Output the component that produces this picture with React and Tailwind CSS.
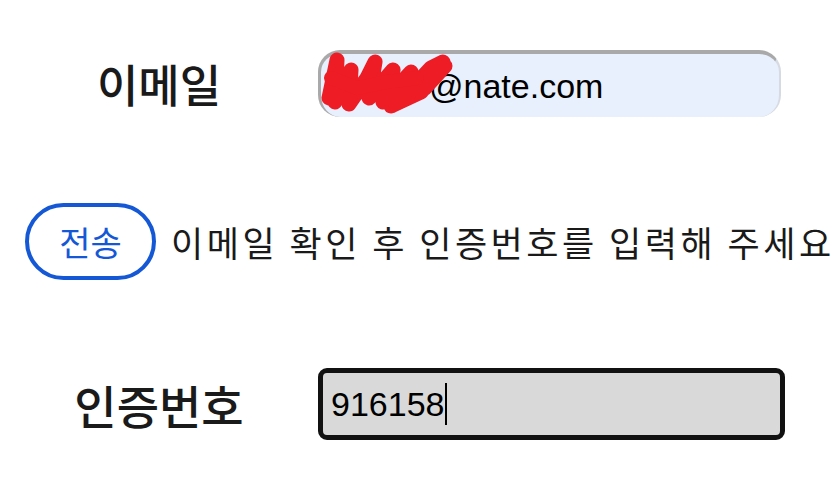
import React from "react";

export default function App() {
  const kr = { fontFamily: '"Noto Sans CJK KR", "Noto Sans", sans-serif' };
  const ar = { fontFamily: '"Liberation Sans", Arial, sans-serif' };
  return (
    <div className="w-[840px] h-[483px] bg-white overflow-hidden pt-[50px] text-[#1a1a1a]">
      {/* email row */}
      <div className="flex items-center h-[67px]">
        <div className="w-[318px] text-center text-[45px] font-medium leading-none" style={kr}>
          이메일
        </div>
        <div className="relative w-[463px] h-[67px] rounded-[22px] bg-[#e8f0fe] border-t-[4px] border-l-[3px] border-r-[2px] border-b-0 border-t-[#a9a9a9] border-l-[#a9a9a9] border-r-[#d6dbe3] flex items-center pl-[10px]">
          <span className="text-[34px] leading-none text-black whitespace-nowrap" style={ar}>
            <span className="inline-block w-[98px]">user1</span>@nate.com
          </span>
          <svg className="absolute left-[-4px] top-[-6px]" width="140" height="66" viewBox="0 0 140 66">
            <path
              d="M12 50 L20 12 L18 54 L34 22 L32 56 L50 30 L58 14 L52 50 L76 22 L66 54 L94 24 L84 52 L114 20 L126 14 L104 44 L74 58 L108 40 L128 18"
              fill="none"
              stroke="#ee1c25"
              strokeWidth="15"
              strokeLinecap="round"
              strokeLinejoin="round"
            />
            <path
              d="M14 30 L40 40 L70 34 L100 30"
              fill="none"
              stroke="#ee1c25"
              strokeWidth="14"
              strokeLinecap="round"
            />
          </svg>
        </div>
      </div>

      {/* send row */}
      <div className="flex items-center mt-[86px] h-[77px]">
        <div className="ml-[25px] w-[131px] h-[77px] rounded-full border-[4px] border-[#1558d6] flex items-center justify-center">
          <span className="text-[34px] font-normal leading-none text-[#1558d6]" style={kr}>
            전송
          </span>
        </div>
        <div className="ml-[15px] text-[35px] leading-none whitespace-nowrap tracking-[3.5px]" style={kr}>
          이메일 확인 후 인증번호를 입력해 주세요
        </div>
      </div>

      {/* code row */}
      <div className="flex items-center mt-[88px] h-[72px]">
        <div className="w-[318px] text-center text-[46px] font-medium leading-none" style={kr}>
          인증번호
        </div>
        <div className="w-[467px] h-[72px] rounded-[9px] border-[5px] border-[#111111] bg-[#d9d9d9] flex items-center pl-[8px]">
          <span className="text-[34px] leading-none text-black" style={ar}>
            916158
          </span>
          <span className="ml-[1px] w-[2px] h-[42px] bg-black"></span>
        </div>
      </div>
    </div>
  );
}
